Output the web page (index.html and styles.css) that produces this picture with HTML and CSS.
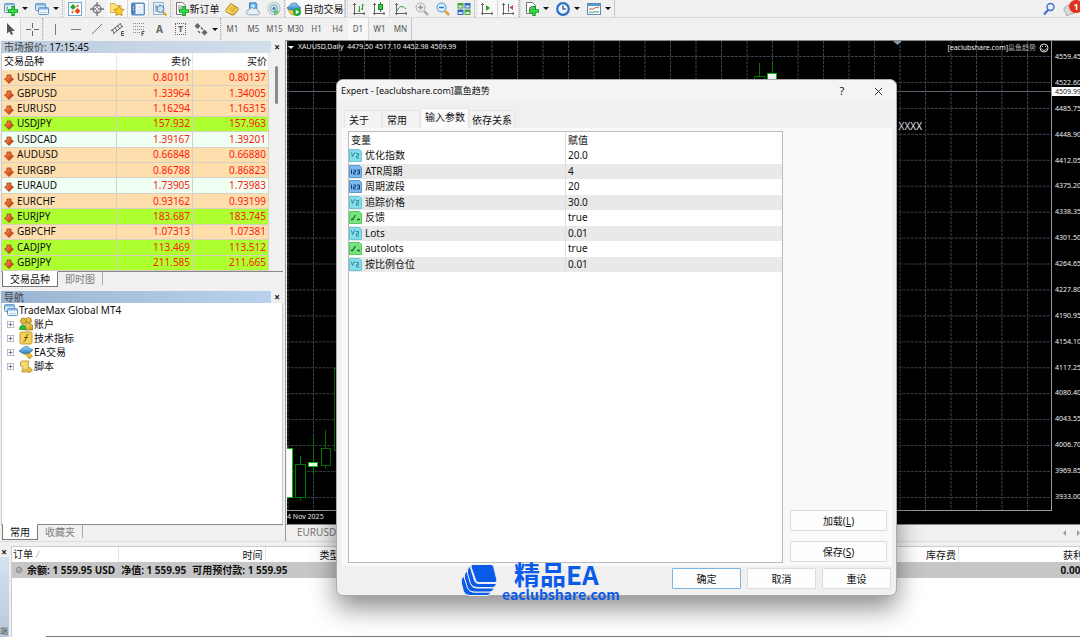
FILE: index.html
```html
<!DOCTYPE html>
<html lang="zh-CN">
<head>
<meta charset="utf-8">
<title>TradeMax Global MT4</title>
<link rel="stylesheet" href="styles.css">
</head>
<body>
<svg class="defs" aria-hidden="true">
  <defs>
    <linearGradient id="g-red" x1="0" y1="0" x2="1" y2="1"><stop offset="0" stop-color="#ff9a5c"/><stop offset="1" stop-color="#b92a08"/></linearGradient>
    <linearGradient id="g-gold" x1="0" y1="0" x2="1" y2="1"><stop offset="0" stop-color="#ffe36e"/><stop offset="1" stop-color="#cf9512"/></linearGradient>
    <linearGradient id="g-blue" x1="0" y1="0" x2="0" y2="1"><stop offset="0" stop-color="#9ed0f5"/><stop offset="1" stop-color="#2f7fc8"/></linearGradient>
  </defs>
  <symbol id="plus" viewBox="0 0 9 9"><path d="M3 0h3v3h3v3H6v3H3V6H0V3h3z" fill="#0d9a1a"/><path d="M3.700.8h1.600v2.900h2.900v1.600H5.300v2.900H3.700V5.300H.8V3.700h2.900z" fill="#2ee044"/></symbol>
  <symbol id="newchart" viewBox="0 0 14 14"><rect x=".5" y="1.500" width="10" height="9" rx="1" fill="#e5f1fa" stroke="#5f91b8"/><path d="M1 2.500h9" stroke="#7db0dc" stroke-width="1.500"/><path d="M3 9V5m0 0h1" stroke="#3ca04e"/><use href="#plus" x="4" y="4" width="10" height="10"/></symbol>
  <symbol id="windows" viewBox="0 0 14 14"><rect x=".5" y="1.500" width="10" height="7" rx="1" fill="#d5e7f6" stroke="#5a94c6"/><path d="M1 2.500h9" stroke="#7db0dc" stroke-width="2"/><rect x="3.500" y="5.500" width="10" height="7" rx="1" fill="#eef6fc" stroke="#5a94c6"/><path d="M4 6.500h9" stroke="#7db0dc" stroke-width="2"/><path d="M5 10.500h7" stroke="#b9d2e8"/></symbol>
  <symbol id="market" viewBox="0 0 14 14"><rect x=".5" y=".5" width="13" height="13" fill="#fff" stroke="#6fa9d6"/><path d="M5 2l3 3-3 3-3-3z" fill="#22ad32"/><path d="M9.500 6l3 3-3 3-3-3z" fill="#e34a1f"/><path d="M9.500 2.500L11 4 9.500 5.500 8 4zM4.500 8.500L6 10l-1.500 1.500L3 10z" fill="#e3603f"/></symbol>
  <symbol id="target" viewBox="0 0 14 14"><circle cx="7" cy="7" r="4" fill="none" stroke="#777" stroke-width="1.500"/><path d="M7 0v6M7 8v6M0 7h6M8 7h6" stroke="#777" stroke-width="1.300"/></symbol>
  <symbol id="star" viewBox="0 0 14 14"><path d="M0 1.500h5l1 2h5v7H0z" fill="#ffe07a" stroke="#c99a25" stroke-width=".7"/><path d="M9 4l1.500 3 3.500.5-2.500 2.500.6 3.500L9 12l-3.100 1.500.6-3.500L4 7.500 7.500 7z" fill="#ffd02e" stroke="#b98208" stroke-width=".8"/></symbol>
  <symbol id="panel" viewBox="0 0 14 14"><rect x=".7" y="1.200" width="12.600" height="11.600" rx="1" fill="#f2f8fd" stroke="#5b8fc2" stroke-width="1.400"/><path d="M1 2h3.500v10H1z" fill="#4b83bb"/><path d="M6.500 5h5M6.500 8h5M6.500 10.500h5" stroke="#cfdcec" stroke-width=".8"/><path d="M2 5h1M2 7.500h1" stroke="#fff"/></symbol>
  <symbol id="tester" viewBox="0 0 14 14"><rect x=".5" y=".5" width="10" height="12" fill="#e7f1fa" stroke="#8eb2d2"/><path d="M3 3v7M7 2v3M2 5h2" stroke="#6d93b8"/><circle cx="7.500" cy="7" r="3.500" fill="#c4e1f6" stroke="#557da2"/><path d="M10 10l3.500 3.500" stroke="#d9a125" stroke-width="2"/></symbol>
  <symbol id="docplus" viewBox="0 0 14 14"><path d="M1.500.5h6l3 3v9h-9z" fill="#fff" stroke="#777"/><path d="M3 4h4M3 6h5M3 8h3" stroke="#888"/><use href="#plus" x="4" y="4" width="10" height="10"/></symbol>
  <symbol id="gold" viewBox="0 0 14 14"><path d="M.8 8l5-6.500L13.200 6v2l-4.500 5H7L.8 9.500z" fill="url(#g-gold)" stroke="#a9740b" stroke-width=".8"/><path d="M1 8.200l6.500 3L13 6.500" fill="none" stroke="#fff0a0"/></symbol>
  <symbol id="cloud" viewBox="0 0 14 14"><path d="M3.500.8h6.500l.8 1V8H3.500z" fill="#5eaef0" stroke="#2d79c0" stroke-width=".8"/><circle cx="7" cy="4" r="1.700" fill="#d8eeff"/><path d="M3 12.800a2.500 2.500 0 0 1 0-5 3 3 0 0 1 5-1 3 3 0 0 1 4 2 2 2 0 0 1-1 4z" fill="#e6edf5" stroke="#8097b5" stroke-width=".8"/></symbol>
  <symbol id="signal" viewBox="0 0 14 14"><circle cx="7" cy="6.500" r="6" fill="none" stroke="#b3c9da" stroke-width="1.200"/><circle cx="7" cy="6.500" r="3.500" fill="none" stroke="#83b5bd" stroke-width="1.400"/><path d="M7 7v6.500a7 7 0 0 0 5.500-4z" fill="#5fbd68" opacity=".8"/><circle cx="7" cy="6.500" r="1.700" fill="#3d8dc2"/></symbol>
  <symbol id="auto" viewBox="0 0 14 14"><path d="M1 7c1 4 3 6 6 6s5-2 6-6z" fill="#f0cd4a" stroke="#b98e18" stroke-width=".7"/><path d="M0 6c2-2 3-2 4-4 2-1.500 5-1.500 6 0 1 2 2 2 4 4-4 3-10 3-14 0z" fill="url(#g-blue)" stroke="#2d6fae" stroke-width=".7"/><circle cx="10" cy="10" r="4" fill="#23a93a"/><path d="M8.800 7.800v4.400L12.300 10z" fill="#fff"/></symbol>
  <symbol id="bars" viewBox="0 0 14 14"><path d="M2.500 1v12M1 2.500h3M1 11.500h12M12 10v3" fill="none" stroke="#666"/><path d="M7.500 4v6M10.500 2v6M6 9h1.500M9 7h1.500M10.500 3H12" stroke="#2d9a3d"/></symbol>
  <symbol id="candle" viewBox="0 0 14 14"><path d="M2.500 1v12M1 2.500h3M1 11.500h12M12 10v3" fill="none" stroke="#666"/><path d="M8.500 0v10" stroke="#178a28"/><rect x="6.500" y="2.500" width="4" height="5" fill="#33cc4b" stroke="#178a28"/></symbol>
  <symbol id="line" viewBox="0 0 14 14"><path d="M2.500 1v12M1 2.500h3M1 11.500h12M12 10v3" fill="none" stroke="#666"/><path d="M3 9c2-5 5-6 9-2" fill="none" stroke="#2d9a3d"/></symbol>
  <symbol id="zoomin" viewBox="0 0 14 14"><circle cx="5.500" cy="5.500" r="4.500" fill="#eee" stroke="#aaa"/><path d="M3 5.500h5M5.500 3v5" stroke="#999" stroke-width="1.300"/><path d="M9 9l4 4" stroke="#b0b0b0" stroke-width="2.500"/></symbol>
  <symbol id="zoomout" viewBox="0 0 14 14"><circle cx="5.500" cy="5.500" r="4.500" fill="#dff1ff" stroke="#3f93d7"/><path d="M3 5.500h5" stroke="#2b79bd" stroke-width="1.500"/><path d="M9 9l4 4" stroke="#d6a232" stroke-width="2.500"/></symbol>
  <symbol id="tiles" viewBox="0 0 14 14"><path d="M.5 1h6v5.500h-6zM7.500 7.500h6V13h-6z" fill="#46a53a"/><path d="M7.500 1h6v5.500h-6zM.5 7.500h6V13h-6z" fill="#2e68c5"/><path d="M1.500 3.500h4v2h-4zM8.500 3.500h4v2h-4zM1.500 10h4v2h-4zM8.500 10h4v2h-4z" fill="#dce9e4"/></symbol>
  <symbol id="scroll" viewBox="0 0 14 14"><path d="M2.500 1v12M1 2.500h3M1 11.500h12M12 10v3" fill="none" stroke="#666"/><path d="M6 3v6l4-3z" fill="#23a636"/></symbol>
  <symbol id="shift" viewBox="0 0 14 14"><path d="M2.500 1v12M1 2.500h3M1 11.500h12M12 10v3" fill="none" stroke="#666"/><path d="M7.500 2v8" stroke="#3778b0"/><path d="M12 3v5L8.500 5.500z" fill="#c8482a"/></symbol>
  <symbol id="indic" viewBox="0 0 14 14"><path d="M1.500.5h6l3 3v8h-9z" fill="#fff" stroke="#777"/><path d="M4 9c1 0 1-5 3-5M4 6h3" fill="none" stroke="#666"/><use href="#plus" x="4" y="4" width="10" height="10"/></symbol>
  <symbol id="clock" viewBox="0 0 14 14"><circle cx="7" cy="7" r="5.800" fill="#e9f5ff" stroke="#2a70c0" stroke-width="2.200"/><path d="M7 3.500V7h3" fill="none" stroke="#335" stroke-width="1.200"/></symbol>
  <symbol id="template" viewBox="0 0 14 14"><rect x=".5" y="1.500" width="13" height="11" fill="#f4f9fd" stroke="#5d8db8"/><path d="M1 3h12" stroke="#5a97cc" stroke-width="2"/><path d="M2 7.500c2-2 3 1 5-1s3 0 5-1.500" fill="none" stroke="#c4553a"/><path d="M2 11c2-2 3 0 5-1s3 1 5-.5" fill="none" stroke="#43a05a"/></symbol>
  <symbol id="arrow" viewBox="0 0 14 14"><path d="M4 1v10.500L6.500 9.500 8 13l2-.8L8.500 9H12z" fill="#555"/></symbol>
  <symbol id="cross" viewBox="0 0 14 14"><path d="M7.500 1v5M7.500 9v5M1 7.500h5M9 7.500h5" stroke="#666"/></symbol>
  <symbol id="vert" viewBox="0 0 14 14"><path d="M7.500 2v11" stroke="#777"/></symbol>
  <symbol id="horz" viewBox="0 0 14 14"><path d="M2 7.500h10" stroke="#777"/></symbol>
  <symbol id="diag" viewBox="0 0 14 14"><path d="M2 12L12 2" stroke="#777"/></symbol>
  <symbol id="channel" viewBox="0 0 14 14"><path d="M0 9l9-7M2 12l10-8M1 7l2 4M4 5l2 4M6 3l3 4M9 1l2 4" stroke="#666"/><path d="M13 9.500h-2.500v4H13M10.500 11.500H13" fill="none" stroke="#555"/></symbol>
  <symbol id="fibo" viewBox="0 0 14 14"><path d="M1 1.500h12M1 4.500h12M1 7.500h12M1 10.500h7" stroke="#888" stroke-dasharray="1 1"/><path d="M12.500 9.500H10V14M10 11.500h2" fill="none" stroke="#555"/></symbol>
  <symbol id="arrows" viewBox="0 0 14 14"><path d="M3.500 1l3 3-3 3-3-3zM10.500 7.500l3 3-3 3-3-3z" fill="#666"/><path d="M4 9l2 2M7 5.500L9 7.500" stroke="#666" stroke-width="1.500"/></symbol>
  <symbol id="down" viewBox="0 0 10 10"><path d="M3 1h4v2.500l2.500 1.500L5 9.500.5 5 3 3.500z" fill="url(#g-red)" stroke="#a33a10" stroke-width=".8"/></symbol>
  <symbol id="box" viewBox="0 0 9 9"><rect x=".5" y=".5" width="8" height="8" fill="#fff" stroke="#aaa"/><path d="M2 4.500h5M4.500 2v5" stroke="#35619c"/></symbol>
  <symbol id="users" viewBox="0 0 14 14"><circle cx="9.500" cy="3.500" r="3" fill="url(#g-gold)" stroke="#8f7212" stroke-width=".7"/><path d="M6 13V8l3-2 4.500 2v5z" fill="url(#g-gold)" stroke="#8f7212" stroke-width=".7"/><circle cx="4.500" cy="4" r="3" fill="#e3b92e" stroke="#8f7212" stroke-width=".7"/><path d="M.5 12.500c0-6 6.500-6 6.500 0z" fill="#31bb35" stroke="#1f8124" stroke-width=".7"/></symbol>
  <symbol id="func" viewBox="0 0 14 14"><rect x="1" y="1" width="12" height="12" rx="1.500" fill="#f2d25c" stroke="#c39a32"/><path d="M9.500 3.500c-3-1-1.500 7-5 7M5 6.500h4" fill="none" stroke="#6b4e00"/></symbol>
  <symbol id="hat" viewBox="0 0 14 14"><path d="M3 8c2 3 6 3 8 1l1-3H3z" fill="#e7bc3d"/><path d="M0 6c2-1 3-3 5-4 2-1 4-1 5 .5 1 1.500 2 1.500 4 2-2 4-9 6-14 1.500z" fill="url(#g-blue)" stroke="#2a6ba2" stroke-width=".6"/><path d="M10.500 8L13.500 11l-3 3-3-3z" fill="url(#g-gold)" stroke="#a97d15" stroke-width=".6"/></symbol>
  <symbol id="scriptico" viewBox="0 0 14 14"><path d="M3 2h7l-1 4 2 5H4L3 7H1.500V3z" fill="#f5d773" stroke="#b58a1d" stroke-width=".8"/><path d="M4 11c-2 0-2 2 0 2h5" fill="#e6bd4d" stroke="#b58a1d" stroke-width=".8"/><path d="M10.500 8L13.500 11l-3 3-3-3z" fill="url(#g-gold)" stroke="#a97d15" stroke-width=".6"/></symbol>
  <symbol id="v-half" viewBox="0 0 13 13"><path d="M.5.5h10l2 2v10H.5z" fill="#85dcea" stroke="#6cc3d3"/><path d="M2.500 3.500l1 4 2.500-4.500M7 4.500h2.500v2.300H7.500V9H10" fill="none" stroke="#2b8ba1"/></symbol>
  <symbol id="v-int" viewBox="0 0 13 13"><path d="M.5.5h10l2 2v10H.5z" fill="#7db8ec" stroke="#5c98d2"/><path d="M2.500 4.500V9M4.500 5h2v2h-2v2h2.500M8 5h2.500v4H8M8.500 7h2" fill="none" stroke="#123f7c"/></symbol>
  <symbol id="v-bool" viewBox="0 0 13 13"><path d="M.5.5h10l2 2v10H.5z" fill="#79e382" stroke="#56c862"/><path d="M2 8.500h1.500L6.500 4M8 8.500h3" fill="none" stroke="#14681f" stroke-width="1.300"/></symbol>
  <symbol id="close" viewBox="0 0 10 10"><path d="M1 1l8 8M9 1L1 9" stroke="currentColor"/></symbol>
</svg>

<header class="toolbars">
  <div class="bar bar-main">
    <button class="tool drop" aria-label="新图表"><svg><use href="#newchart"/></svg><i class="caret"></i></button>
    <button class="tool drop" aria-label="窗口"><svg><use href="#windows"/></svg><i class="caret"></i></button>
    <span class="sep"></span>
    <button class="tool on" aria-label="市场报价"><svg><use href="#market"/></svg></button>
    <button class="tool" aria-label="数据窗口"><svg><use href="#target"/></svg></button>
    <button class="tool on" aria-label="导航"><svg><use href="#star"/></svg></button>
    <button class="tool on" aria-label="终端"><svg><use href="#panel"/></svg></button>
    <button class="tool" aria-label="测试"><svg><use href="#tester"/></svg></button>
    <span class="sep"></span>
    <button class="tool order"><svg><use href="#docplus"/></svg>新订单</button>
    <button class="tool" aria-label="MetaEditor"><svg><use href="#gold"/></svg></button>
    <button class="tool" aria-label="VPS"><svg><use href="#cloud"/></svg></button>
    <button class="tool" aria-label="信号"><svg><use href="#signal"/></svg></button>
    <span class="sep thin"></span>
    <button class="tool autotrade on"><svg><use href="#auto"/></svg>自动交易</button>
    <span class="sep"></span>
    <button class="tool" aria-label="柱状图"><svg><use href="#bars"/></svg></button>
    <button class="tool on" aria-label="蜡烛图"><svg><use href="#candle"/></svg></button>
    <button class="tool" aria-label="折线图"><svg><use href="#line"/></svg></button>
    <button class="tool" aria-label="放大"><svg><use href="#zoomin"/></svg></button>
    <button class="tool" aria-label="缩小"><svg><use href="#zoomout"/></svg></button>
    <button class="tool" aria-label="平铺"><svg><use href="#tiles"/></svg></button>
    <span class="sep"></span>
    <button class="tool on" aria-label="自动滚动"><svg><use href="#scroll"/></svg></button>
    <button class="tool on" aria-label="图表平移"><svg><use href="#shift"/></svg></button>
    <span class="sep thin"></span>
    <button class="tool drop" aria-label="指标"><svg><use href="#indic"/></svg><i class="caret"></i></button>
    <button class="tool drop" aria-label="时间周期"><svg><use href="#clock"/></svg><i class="caret"></i></button>
    <button class="tool drop" aria-label="模板"><svg><use href="#template"/></svg><i class="caret"></i></button>
    <span class="end"></span>
    <div class="right">
      <button class="tool" aria-label="搜索"><svg viewBox="0 0 14 14"><circle cx="8.500" cy="5" r="3.500" fill="#e6f0ff" stroke="#3f6fd0" stroke-width="1.400"/><path d="M6 8l-4 4.500" stroke="#3f6fd0" stroke-width="2.200"/></svg></button>
      <button class="tool notice" aria-label="通知"><svg viewBox="0 0 14 14"><path d="M1 8c0-3 3-5 6-5s6 2 6 5-3 4-5 4l-5 2 .5-3C2 10.500 1 9.500 1 8z" fill="#d9d9d9" stroke="#aaa"/></svg><b class="badge">1</b></button>
    </div>
  </div>
  <div class="bar bar-draw">
    <button class="tool on" aria-label="光标"><svg><use href="#arrow"/></svg></button>
    <button class="tool" aria-label="十字线"><svg><use href="#cross"/></svg></button>
    <span class="sep thin"></span>
    <button class="tool" aria-label="垂直线"><svg><use href="#vert"/></svg></button>
    <button class="tool" aria-label="水平线"><svg><use href="#horz"/></svg></button>
    <button class="tool" aria-label="趋势线"><svg><use href="#diag"/></svg></button>
    <button class="tool" aria-label="等距通道"><svg><use href="#channel"/></svg></button>
    <button class="tool" aria-label="斐波那契"><svg><use href="#fibo"/></svg></button>
    <button class="tool letter">A</button>
    <button class="tool letter"><span class="boxed">T</span></button>
    <button class="tool drop" aria-label="箭头"><svg><use href="#arrows"/></svg><i class="caret"></i></button>
    <span class="sep thin"></span>
    <button class="tool period">M1</button><button class="tool period">M5</button><button class="tool period">M15</button><button class="tool period">M30</button><button class="tool period">H1</button><button class="tool period">H4</button><button class="tool period on">D1</button><button class="tool period">W1</button><button class="tool period">MN</button>
    <span class="end"></span>
  </div>
</header>

<main class="work">
  <aside class="side">
    <section class="panel market">
      <div class="caption"><h2>市场报价: <span>17:15:45</span></h2><button aria-label="关闭">×</button></div>
      <div class="quotes">
        <table>
          <thead><tr><th>交易品种</th><th>卖价</th><th>买价</th></tr></thead>
          <tbody>
            <tr><td><svg><use href="#down"/></svg>USDCHF</td><td>0.80101</td><td>0.80137</td></tr>
            <tr><td><svg><use href="#down"/></svg>GBPUSD</td><td>1.33964</td><td>1.34005</td></tr>
            <tr><td><svg><use href="#down"/></svg>EURUSD</td><td>1.16294</td><td>1.16315</td></tr>
            <tr class="lime"><td><svg><use href="#down"/></svg>USDJPY</td><td>157.932</td><td>157.963</td></tr>
            <tr class="mint"><td><svg><use href="#down"/></svg>USDCAD</td><td>1.39167</td><td>1.39201</td></tr>
            <tr><td><svg><use href="#down"/></svg>AUDUSD</td><td>0.66848</td><td>0.66880</td></tr>
            <tr><td><svg><use href="#down"/></svg>EURGBP</td><td>0.86788</td><td>0.86823</td></tr>
            <tr class="mint"><td><svg><use href="#down"/></svg>EURAUD</td><td>1.73905</td><td>1.73983</td></tr>
            <tr><td><svg><use href="#down"/></svg>EURCHF</td><td>0.93162</td><td>0.93199</td></tr>
            <tr class="lime"><td><svg><use href="#down"/></svg>EURJPY</td><td>183.687</td><td>183.745</td></tr>
            <tr><td><svg><use href="#down"/></svg>GBPCHF</td><td>1.07313</td><td>1.07381</td></tr>
            <tr class="lime"><td><svg><use href="#down"/></svg>CADJPY</td><td>113.469</td><td>113.512</td></tr>
            <tr class="lime"><td><svg><use href="#down"/></svg>GBPJPY</td><td>211.585</td><td>211.665</td></tr>
          </tbody>
        </table>
        <div class="scroll"><span></span></div>
      </div>
      <div class="tabs"><button class="active">交易品种</button><button>即时图</button></div>
    </section>
    <section class="panel nav">
      <div class="caption strong"><h2>导航</h2><button aria-label="关闭">×</button></div>
      <ul class="tree">
        <li class="root"><svg class="ico"><use href="#windows"/></svg>TradeMax Global MT4</li>
        <li><svg class="box"><use href="#box"/></svg><svg class="ico"><use href="#users"/></svg>账户</li>
        <li><svg class="box"><use href="#box"/></svg><svg class="ico"><use href="#func"/></svg>技术指标</li>
        <li><svg class="box"><use href="#box"/></svg><svg class="ico"><use href="#hat"/></svg>EA交易</li>
        <li><svg class="box"><use href="#box"/></svg><svg class="ico"><use href="#scriptico"/></svg>脚本</li>
      </ul>
      <div class="tabs"><button class="active">常用</button><button>收藏夹</button></div>
    </section>
  </aside>

  <section class="charts">
    <div class="chart">
      <div class="plot">
        <svg class="canvas">
          <defs>
            <pattern id="vg" x="26" y="0" width="25.500" height="4" patternUnits="userSpaceOnUse"><path d="M.5 0v3" stroke="#37424c"/></pattern>
            <pattern id="hg" x="0" y="15" width="4" height="25.940" patternUnits="userSpaceOnUse"><path d="M0 .5h3" stroke="#37424c"/></pattern>
          </defs>
          <rect width="100%" height="100%" fill="url(#vg)"/>
          <rect width="100%" height="100%" fill="url(#hg)"/>
          <path d="M0 50.500h100M600 50.500h200" stroke="#56636e"/>
          <g stroke="#007a00" fill="#000">
            <path d="M0 405v53" stroke="#00b000"/><rect x="-5.500" y="407.500" width="11" height="49" fill="#fff" stroke="#00c000"/>
            <path d="M13.500 415v44"/><rect x="8.500" y="423.500" width="10" height="33"/>
            <path d="M26.500 395v39"/><rect x="21.500" y="421.500" width="9" height="4" fill="#fff" stroke="#00c000"/>
            <path d="M38.500 389v38"/><rect x="34.500" y="407.500" width="9" height="17"/>
            <rect x="47.500" y="327.500" width="10" height="82"/>
            <path d="M472.500 22v20"/><rect x="467.500" y="35.500" width="10" height="20"/>
            <path d="M485.500 22v20"/><rect x="480.500" y="32.500" width="9" height="20" fill="#fff" stroke="#00c000"/>
          </g>
          <path d="M606 0h9l-4.500 4z" fill="#8797a8"/>
        </svg>
        <div class="plot-head">
          <span class="symbol"><i class="caret"></i>XAUUSD,Daily&nbsp; 4479.50 4517.10 4452.98 4509.99</span>
          <span class="expert">[eaclubshare.com]<em>赢鱼趋势</em><svg viewBox="0 0 10 10"><circle cx="5" cy="5" r="4" fill="none" stroke="#ddd"/><path d="M3 3.500h1M6 3.500h1M2.500 5.500c1 2.500 4 2.500 5 0" fill="none" stroke="#ddd"/></svg></span>
        </div>
        <span class="mark">XXXX</span>
      </div>
      <div class="axis">
        <span>4559.45</span><span>4522.60</span><span>4485.75</span><span>4448.90</span><span>4412.05</span><span>4375.20</span><span>4338.35</span><span>4301.50</span><span>4264.65</span><span>4227.80</span><span>4190.95</span><span>4154.10</span><span>4117.25</span><span>4080.40</span><span>4043.55</span><span>4006.70</span><span>3969.85</span><span>3933.00</span>
        <b class="price">4509.99</b>
      </div>
      <div class="dates">4 Nov 2025</div>
    </div>
    <div class="chart-tabs"><button>EURUSD</button><span class="arrows"><i></i><i class="next"></i></span></div>
  </section>
</main>

<footer class="terminal">
  <div class="grip"><button aria-label="关闭">×</button><div class="grip-title">端</div></div>
  <div class="orders">
    <table>
      <colgroup><col class="c-order"><col class="c-time"><col class="c-type"><col><col class="c-profit"></colgroup>
      <thead><tr><th class="first">订单<small>⁄</small></th><th>时间</th><th>类型</th><th>库存费</th><th class="profit">获利</th></tr></thead>
      <tbody><tr><td colspan="4"><span class="sum"><svg viewBox="0 0 8 8"><circle cx="4" cy="4" r="2.800" fill="#bbb" stroke="#888"/><path d="M2 6l4-4" stroke="#888"/></svg><span>余额: 1 559.95 USD</span><span>净值: 1 559.95</span><span>可用预付款: 1 559.95</span></span></td><td class="profit">0.00</td></tr></tbody>
    </table>
    <div class="edge"></div>
  </div>
</footer>

<div class="dialog" role="dialog" aria-labelledby="dlg-title">
  <div class="dlg-title"><h1 id="dlg-title">Expert - [eaclubshare.com]赢鱼趋势</h1><button class="help" aria-label="帮助">?</button><button aria-label="关闭"><svg><use href="#close"/></svg></button></div>
  <div class="dlg-tabs"><button>关于</button><button>常用</button><button class="active">输入参数</button><button class="last">依存关系</button></div>
  <div class="dlg-page">
    <div class="params">
      <table>
        <thead><tr><th>变量</th><th>赋值</th></tr></thead>
        <tbody>
          <tr><td><svg><use href="#v-half"/></svg>优化指数</td><td>20.0</td></tr>
          <tr><td><svg><use href="#v-int"/></svg>ATR周期</td><td>4</td></tr>
          <tr><td><svg><use href="#v-int"/></svg>周期波段</td><td>20</td></tr>
          <tr><td><svg><use href="#v-half"/></svg>追踪价格</td><td>30.0</td></tr>
          <tr><td><svg><use href="#v-bool"/></svg>反馈</td><td>true</td></tr>
          <tr><td><svg><use href="#v-half"/></svg>Lots</td><td>0.01</td></tr>
          <tr><td><svg><use href="#v-bool"/></svg>autolots</td><td>true</td></tr>
          <tr><td><svg><use href="#v-half"/></svg>按比例仓位</td><td>0.01</td></tr>
        </tbody>
      </table>
    </div>
    <div class="files"><button class="btn">加载(<u>L</u>)</button><button class="btn">保存(<u>S</u>)</button></div>
  </div>
  <div class="dlg-foot"><button class="btn primary">确定</button><button class="btn">取消</button><button class="btn">重设</button></div>
</div>

<div class="brand">
  <svg viewBox="0 0 36 32"><g fill="#0b5bea" stroke="#f0f0f0" stroke-width="1"><path d="M3 12l4 12q1 4 5 4h18q-1 3.500-4 3.500H9q-5 0-6.500-4L.3 19q-1-4 2.700-7z"/><path d="M6 7l4 13q1 4 5 4h18q-1 4-4 4H13q-5 0-6.500-4L3.500 14q-1-4 2.500-7z"/><path d="M9 2l4 13q1 4.500 5 4.500h17.500q-.5 4-4 4H16q-5 0-6.500-4L6.500 9.500Q5.500 5 9 2z"/><path d="M12 .5h18q2 0 2.600 2l3.200 13q.6 3-2.300 3H18q-2.500 0-3.200-2L10 3Q9.500.5 12 .5z"/></g></svg>
  <div class="brand-text"><strong>精品EA</strong><span>eaclubshare.com</span></div>
</div>
</body>
</html>
```
FILE: styles.css
```css
* { box-sizing: border-box; }
body {
  margin: 0;
  height: 100vh;
  display: flex;
  flex-direction: column;
  overflow: hidden;
  position: relative;
  background: #f0f0f0;
  color: #111;
  font: 10px/14px "Noto Sans", "Noto Sans CJK SC", sans-serif;
}
button { margin: 0; padding: 0; border: 0; background: none; font: inherit; color: inherit; white-space: nowrap; }
h1, h2 { margin: 0; font: inherit; }
table { border-collapse: collapse; width: 100%; table-layout: fixed; }
th { font-weight: normal; }
th, td { padding: 0; white-space: nowrap; }
.defs { position: absolute; width: 0; height: 0; }
.caret { border: 3px solid transparent; border-top-color: #111; border-bottom: 0; }

/* toolbars */
.toolbars { flex: none; }
.bar { display: flex; align-items: stretch; }
.bar-main { height: 18px; border-bottom: 1px solid #dadada; }
.bar-draw { height: 22px; }
.tool { flex: none; width: 21px; display: flex; align-items: center; justify-content: center; }
.tool svg { width: 14px; height: 14px; flex: none; }
.tool.on { background: #f8f8f8; border-right: 1px solid #d8d8d8; }
.tool.drop { width: 31px; gap: 4px; }
.bar-draw .drop { width: 29px; }
.sep { flex: none; width: 3px; border-left: 1px dotted #aaa; border-right: 1px solid #e2e2e2; }
.sep.thin { width: 2px; }
.end { width: 1px; background: #c8c8c8; }
.order { width: 48px; gap: 1px; }
.autotrade { width: 59px; gap: 3px; }
.right { margin-left: auto; display: flex; }
.notice { position: relative; }
.badge { position: absolute; right: -3px; top: 0; width: 14px; height: 13px; border-radius: 7px; background: #e0301e; color: #fff; font-size: 9px; line-height: 13px; text-align: center; }
.letter { font-weight: bold; color: #666; }
.boxed { width: 11px; border: 1px dotted #666; line-height: 10px; font-size: 9px; }
.period { font-size: 8px; color: #555; }

/* side panels */
.work { flex: 1; min-height: 0; display: flex; }
.side { flex: none; width: 286px; display: flex; flex-direction: column; padding: 1px 2px 1px 1px; gap: 4px; border-right: 1px solid #999; }
.panel { display: flex; flex-direction: column; }
.nav { flex: 1; }
.caption { display: flex; height: 12px; line-height: 12px; }
.caption h2 { flex: 1; padding-left: 3px; background: linear-gradient(90deg, #bacbdd, #d2deea); color: #444; }
.caption h2 span { color: #111; }
.caption.strong h2 { background: linear-gradient(90deg, #9ab4d3, #b9d1ec); color: #444; }
.caption button { width: 12px; font-weight: bold; line-height: 11px; }
.quotes { display: flex; border-left: 1px solid #ccc; }
.quotes table { flex: 1; height: 218px; background: #fff; }
.quotes th:first-child { text-align: left; width: 43%; padding-left: 2px; }
.quotes th { height: 17px; padding-right: 1px; text-align: right; border-right: 1px solid #e8e8e8; line-height: 13px; }
.quotes td { height: 15px; padding: 0 2px; line-height: 13px; text-align: right; color: #fb1a10; border: 1px solid #d8d0c2; border-width: 0 1px 1px 0; }
.quotes td:first-child { text-align: left; color: #111; }
.quotes td svg { width: 10px; height: 10px; margin-right: 3px; vertical-align: text-bottom; }
.quotes tbody tr { background: #ffdead; }
.quotes tbody .lime { background: #adff2f; }
.quotes tbody .mint { background: #f0fff4; }
.scroll { width: 14px; padding: 13px 5px 0 6px; }
.scroll span { display: block; height: 38px; border-radius: 2px; background: #8a8a8a; }
.tabs { display: flex; height: 16px; border-top: 1px solid #888; }
.tabs button { padding: 0 7px; line-height: 14px; color: #808080; border-right: 1px solid #aaa; margin-bottom: 2px; }
.tabs .active { background: #fff; color: #111; border: 1px solid #777; border-top-color: #fff; margin: -1px 0 0 1px; }
.tree { flex: 1; margin: 0; padding: 0 0 0 5px; list-style: none; background: #fff; border: 1px solid #ccc; border-width: 0 1px; }
.tree li { display: flex; align-items: center; height: 14px; gap: 1px; }
.tree .root { margin-left: -3px; }
.tree .ico { width: 14px; height: 14px; }
.tree .box { width: 7px; height: 7px; margin-right: 4px; }

/* chart */
.charts { flex: 1; min-width: 0; display: flex; flex-direction: column; border-top: 1px solid #888; }
.chart { flex: 1; min-height: 0; display: grid; grid-template: minmax(0, 1fr) 13px / minmax(0, 1fr) 28px; background: #000; color: #eee; font-size: 7px; line-height: 8px; margin-left: 1px; }
.plot { position: relative; border: 1px solid #999; border-width: 0 1px 1px 0; overflow: hidden; }
.canvas { position: absolute; inset: 0; width: 100%; height: 100%; }
.plot-head { position: relative; display: flex; justify-content: space-between; padding: 2px 2px 0 1px; }
.plot-head .caret { display: inline-block; border-top-color: #fff; margin-right: 4px; vertical-align: middle; }
.expert { display: flex; align-items: center; }
.expert em { font-style: normal; color: #aaa; }
.expert svg { width: 10px; height: 10px; margin-left: 3px; }
.mark { position: absolute; right: 129px; top: 78px; font-size: 10px; line-height: 14px; }
.axis { position: relative; display: flex; flex-direction: column; justify-content: space-between; padding: 12px 0 10px 3px; overflow: hidden; }
.price { position: absolute; left: 0; right: 0; top: 46px; padding-left: 3px; background: #fff; color: #222; font-weight: normal; line-height: 9px; }
.dates { grid-column: 1 / 3; padding-top: 2px; }
.chart-tabs { height: 17px; display: flex; align-items: flex-start; justify-content: space-between; border-top: 1px solid #888; padding-left: 11px; color: #777; line-height: 15px; }
.arrows { display: flex; gap: 11px; padding: 5px 0 0; }
.arrows i { border: 3px solid transparent; border-right: 3px solid #999; border-left: 0; }
.arrows .next { border-right: 0; border-left: 3px solid #999; }

/* terminal */
.terminal { flex: none; height: 96px; display: flex; padding-top: 4px; border-top: 1px solid #ddd; }
.grip { flex: none; width: 11px; display: flex; flex-direction: column; }
.grip button { height: 11px; width: 8px; line-height: 8px; font-weight: bold; }
.grip-title { flex: 1; width: 9px; background: linear-gradient(#d4e2f0, #b8c9dc); display: flex; align-items: flex-end; color: #555; font-size: 8px; line-height: 12px; }
.orders { flex: 1; min-width: 0; display: flex; flex-direction: column; background: #fff; border: 1px solid #ccc; border-width: 1px 0 0 1px; }
.orders th { text-align: right; padding-right: 2px; line-height: 14px; border-right: 1px solid #e4e4e4; }
.orders .first { text-align: left; padding-left: 1px; }
.first small { color: #aaa; margin-left: 4px; }
.c-order { width: 106px; }
.c-time { width: 147px; }
.c-type { width: 77px; }
.c-profit { width: 121px; }
.orders .profit { text-align: left; padding-left: 104px; }
.orders td.profit { padding-left: 102px; }
.orders td { background: #c6c6c6; font-weight: bold; line-height: 16px; }
.sum { display: flex; align-items: center; gap: 6px; padding-left: 3px; }
.sum svg { width: 8px; height: 8px; margin-right: -2px; }
.edge { margin: auto 0 0 34px; height: 1px; background: #777; }

/* dialog */
.dialog { position: absolute; left: 336px; top: 79px; width: 561px; height: 517px; display: flex; flex-direction: column; background: #f0f0f0; border: 1px solid #aaa; border-radius: 7px; box-shadow: 0 12px 26px rgba(0, 0, 0, .45); overflow: hidden; }
.dlg-title { height: 22px; display: flex; align-items: center; padding-left: 4px; background: #f4f4f4; }
.dlg-title h1 { flex: 1; font-size: 9px; }
.dlg-title button { width: 36px; display: flex; justify-content: center; color: #222; }
.dlg-title .help { font-size: 11px; }
.dlg-title svg { width: 9px; height: 9px; }
.dlg-tabs { display: flex; align-items: flex-end; height: 26px; padding-left: 7px; }
.dlg-tabs button { width: 38px; height: 18px; padding: 0 0 0 4px; text-align: left; background: #f3f3f3; border: 1px solid #e6e6e6; border-bottom: 0; }
.dlg-tabs .active { width: 49px; height: 20px; padding-bottom: 3px; background: #fbfbfb; }
.dlg-tabs .last { width: 46px; padding-left: 2px; }
.dlg-page { flex: 1; display: flex; gap: 7px; margin: 0 4px 0 5px; padding: 3px 5px 3px 6px; background: #f9f9f9; }
.params { flex: 1; background: #fff; border: 1px solid #bbb; }
.params table { height: 140px; }
.params th { height: 16px; text-align: left; line-height: 14px; }
.params th:first-child { width: 50%; border-right: 1px solid #e0e0e0; padding-left: 2px; }
.params td { height: 15px; line-height: 13px; }
.params td:first-child { border-right: 1px solid #ddd; }
.params th + th, .params td + td { padding-left: 2px; }
.params td svg { width: 13px; height: 13px; margin-right: 3px; vertical-align: top; }
.params tbody tr:nth-child(even) { background: #e9e9e9; }
.files { width: 97px; display: flex; flex-direction: column; justify-content: flex-end; gap: 10px; }
.btn { height: 21px; background: #fdfdfd; border: 1px solid #dcdcdc; border-radius: 1px; }
.files .btn:last-child { margin-bottom: 1px; }
.dlg-foot { height: 29px; display: flex; justify-content: flex-end; align-items: flex-start; gap: 6px; padding: 2px 5px 0; }
.dlg-foot .btn { width: 69px; }
.btn.primary { border-color: #7ab5e6; }

/* watermark */
.brand { position: absolute; left: 461px; top: 561px; display: flex; color: #0b5bea; }
.brand svg { width: 36px; height: 32px; margin-top: 3px; }
.brand-text { display: flex; flex-direction: column; margin-left: 5px; }
.brand strong { font: bold 26px/26px "Noto Sans CJK SC", sans-serif; padding-left: 12px; }
.brand span { font: bold 14px/14px "Noto Sans CJK SC", sans-serif; }
```
